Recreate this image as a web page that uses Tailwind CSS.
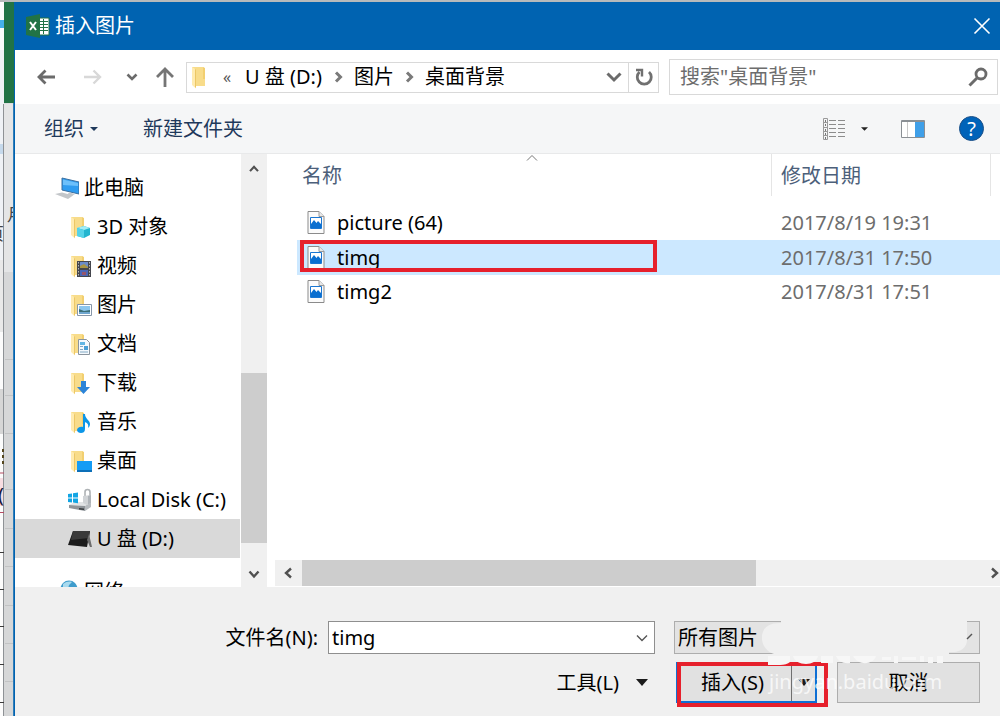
<!DOCTYPE html>
<html lang="zh-CN">
<head>
    <meta charset="UTF-8">
    <meta name="viewport" content="width=device-width, initial-scale=1.0">
    <title>插入图片</title>
    <script src="https://cdn.jsdelivr.net/npm/@tailwindcss/browser@4"></script>
</head>
<body class="h-screen overflow-hidden flex flex-col bg-[#dcdddf] font-['Noto_Sans','Noto_Sans_CJK_SC',sans-serif] text-xl leading-7 text-black">

<!-- Shared icon shapes -->
<svg class="hidden">
    <defs>
        <symbol id="folder" viewBox="0 0 22 24">
            <path d="M1 2h11l2 2v17H5L1 19z" fill="#f8dc8a"/>
            <path d="M1 2l4 2.500v19L1 20z" fill="#ffebb0"/>
            <path d="M5 4.500V23l-1-1V4z" fill="#ecc766"/>
            <path d="M12 2l2 1v11h-2z" fill="#f2cf70"/>
        </symbol>
        <symbol id="image-file" viewBox="0 0 18 24">
            <path d="M1 .5h11l5 5v17H1z" fill="#fbfbfb" stroke="#8b8b8b"/>
            <path d="M12 .5v5h5" fill="#e8e8e8" stroke="#9a9a9a"/>
            <path d="M3.500 6.500h11v11h-11z" fill="#fff" stroke="#1976d2"/>
            <path d="M4 17v-4l3-4 2.500 3 1.500-2 3 3v4z" fill="#0a6fd0"/>
        </symbol>
    </defs>
</svg>

<!-- Ribbon edge above the dialog -->
<div class="h-[2px] shrink-0 bg-[#b7babb]"></div>

<div class="flex flex-1 min-h-0">
    <!-- Workbook window showing behind the dialog -->
    <svg class="w-[14px] h-full shrink-0" viewBox="0 0 14 714" preserveAspectRatio="xMinYMin slice">
        <path d="M0 0h4v714H0z" fill="#fcfcfc"/>
        <path d="M0 18h4v8H0z" fill="#45b0ea"/>
        <path d="M0 48h4v210H0z" fill="#eff2f6"/>
        <path d="M0 258h4v72H0z" fill="#e9e9e9"/>
        <path d="M0 142h4v10H0z" fill="#c5d9ec"/>
        <path d="M0 387h4v45H0z" fill="#d6d6d6"/>
        <path d="M0 476h4v28H0z" fill="#f7dde2"/>
        <path d="M4 102h9v612H4z" fill="#e4e5e6"/>
        <path d="M4 270h9v444H4z" fill="#d6d7d8"/>
        <path d="M4 0h10v101H4z" fill="#217346"/>
        <path d="M3.500 102v612" stroke="#8e9296"/>
        <path d="M5 357.500h8M5 393.500h8M5 431.500h8M5 487.500h8M5 526.500h8M5 564.500h8M5 603.500h8M5 641.500h8M5 679.500h8" stroke="#c2c3c4"/>
        <path d="M0 550.500h4M0 587.500h4M0 624.500h4M0 662.500h4M0 700.500h4" stroke="#3a3a3a"/>
        <path d="M0 471h4M0 510.500h4" stroke="#b54c62"/>
        <path d="M2 447h2v3H2zM2 453h2v3H2zM2 459h2v3H2z" fill="#55471f"/>
        <text x="7" y="219" font-size="17" fill="#444">月</text>
        <text x="-13" y="238" font-size="17" fill="#444">页</text>
        <text x="-2" y="500" font-size="20" fill="#16163a">(</text>
        <path d="M13.500 101v613" stroke="#2f7cb8"/>
    </svg>

    <!-- Dialog -->
    <main class="flex-1 min-w-0 flex flex-col bg-white border-l border-[#0063b1]">
        <!-- Title bar -->
        <header class="h-12 shrink-0 bg-[#0063b1] text-white flex items-center pl-[11px] pr-[9px]">
            <svg class="w-6 h-6" viewBox="0 0 24 24">
                <path d="M11 4h12v17H11z" fill="#fff" stroke="#217346"/>
                <path d="M13 7.500h9M13 10.500h9M13 13.500h9M13 16.500h9M17.500 5v15" stroke="#217346"/>
                <path d="M0 3l14-3v24L0 21z" fill="#217346"/>
                <path d="M4 8l6 8M10 8l-6 8" stroke="#fff" stroke-width="2"/>
            </svg>
            <h1 class="ml-[5px] flex-1">插入图片</h1>
            <button aria-label="关闭">
                <svg class="w-[18px] h-[18px]" viewBox="0 0 18 18"><path d="M1.500 1.500l15 15M16.500 1.500l-15 15" stroke="#fff" stroke-width="1.600"/></svg>
            </button>
        </header>

        <!-- Navigation -->
        <nav class="h-[54px] shrink-0 flex items-center pl-[22px] pr-[2px]">
            <button aria-label="后退" class="mr-[29px]">
                <svg class="w-[18px] h-[18px]" viewBox="0 0 18 18" fill="none" stroke="#6b6b6b" stroke-width="2.800"><path d="M18 9H2M8.500 2.500L2 9l6.500 6.500"/></svg>
            </button>
            <button aria-label="前进" class="mr-6">
                <svg class="w-[18px] h-[18px]" viewBox="0 0 18 18" fill="none" stroke="#d8d8d8" stroke-width="2.400"><path d="M0 9h16M9.500 2.500L16 9l-6.500 6.500"/></svg>
            </button>
            <button aria-label="最近浏览的位置" class="mr-[18px]">
                <svg class="w-3 h-3" viewBox="0 0 12 12" fill="none" stroke="#6b6b6b" stroke-width="2.600"><path d="M1.500 3.500L6 8l4.500-4.500"/></svg>
            </button>
            <button aria-label="上移" class="mr-3">
                <svg class="w-[18px] h-5" viewBox="0 0 18 20" fill="none" stroke="#757575" stroke-width="2.800"><path d="M9 20V2M1 10l8-8 8 8"/></svg>
            </button>
            <div class="flex-1 h-[31px] flex items-center border border-[#d9d9d9] whitespace-nowrap">
                <svg class="w-[22px] h-6 ml-1" viewBox="0 0 22 24"><use href="#folder"/></svg>
                <span class="ml-[10px] w-[22px] text-base text-[#555]">«</span>
                <a href="#" class="w-[88px]">U 盘 (D:)</a>
                <svg class="w-3 h-3" viewBox="0 0 12 12" fill="none" stroke="#7a7a7a" stroke-width="3"><path d="M3 1.500L7.500 6 3 10.500"/></svg>
                <a href="#" class="ml-[9px] w-[50px]">图片</a>
                <svg class="w-3 h-3" viewBox="0 0 12 12" fill="none" stroke="#7a7a7a" stroke-width="3"><path d="M3 1.500L7.500 6 3 10.500"/></svg>
                <a href="#" class="ml-[9px] flex-1">桌面背景</a>
                <button aria-label="以前的位置" class="mr-[6px]">
                    <svg class="w-4 h-4" viewBox="0 0 16 16" fill="none" stroke="#6b6b6b" stroke-width="3"><path d="M1.500 4.500L8 11l6.500-6.500"/></svg>
                </button>
                <button aria-label="刷新" class="h-full w-[30px] border-l border-[#d9d9d9] flex items-center justify-center">
                    <svg class="w-[18px] h-[18px]" viewBox="0 0 18 18" fill="none" stroke="#707070" stroke-width="2.800"><path d="M14 4A7 7 0 1 1 4.500 4"/><path d="M1 2h6v6.500" stroke-width="2.400"/></svg>
                </button>
            </div>
            <div class="ml-[10px] w-[329px] h-9 flex items-center border border-[#d9d9d9] pl-[10px] pr-[9px]">
                <input type="text" aria-label="搜索" placeholder='搜索"桌面背景"' class="flex-1 min-w-0 outline-none placeholder:text-[#6d6d6d]">
                <svg class="w-5 h-5" viewBox="0 0 20 20" fill="none" stroke="#6b6b6b"><circle cx="13" cy="7" r="5" stroke-width="2.800"/><path d="M9.500 10.500L1.500 18.500" stroke-width="3"/></svg>
            </div>
        </nav>

        <!-- Toolbar -->
        <div class="h-[50px] shrink-0 flex items-center bg-[#f5f6f7] border-b border-[#e8e9ea] pl-[29px] pr-4 text-[#1e395b]">
            <button class="flex items-center w-[99px]">组织
                <svg class="w-2 h-1 ml-[6px]" viewBox="0 0 8 4"><path d="M0 0h8L4 4z" fill="#1e395b"/></svg>
            </button>
            <button>新建文件夹</button>
            <button aria-label="更改视图" class="ml-auto flex items-center">
                <svg class="w-[23px] h-[22px]" viewBox="0 0 23 22" fill="none">
                    <path d="M.5.5h4v21h-4zM.5 4.500h4M.5 9.500h4M.5 13.500h4M.5 17.500h4" stroke="#9a9a9a"/>
                    <path d="M2.500 2v2M2.500 6v2M2.500 11v2M2.500 15v2M2.500 19v2" stroke="#777"/>
                    <path d="M6 2.500h7M6 6.500h7M6 10.500h7M6 14.500h7M6 18.500h7M15 2.500h7M15 6.500h7M15 10.500h7M15 14.500h7M15 18.500h7" stroke="#8c8c8c"/>
                </svg>
                <svg class="w-[7px] h-1 ml-[15px]" viewBox="0 0 8 4"><path d="M0 0h8L4 4z" fill="#222"/></svg>
            </button>
            <button aria-label="预览窗格" class="ml-[33px]">
                <svg class="w-6 h-[18px]" viewBox="0 0 24 18"><path d="M.5.5h23v17H.5z" fill="#fff" stroke="#8a8f94"/><path d="M6.500 1v16" stroke="#c9c9c9"/><path d="M14 1h9v16h-9z" fill="#3f9fe8"/><path d="M1 1.500h22" stroke="#8a8f94"/></svg>
            </button>
            <button aria-label="帮助" class="ml-[34px] size-[25px] rounded-full bg-[#0063b9] border border-[#1b4f87] text-white text-xl leading-[23px]">?</button>
        </div>

        <div class="flex-1 min-h-0 flex">
            <!-- Folder tree -->
            <ul class="w-[225px] shrink-0 overflow-hidden pt-[14px] whitespace-nowrap">
                <li class="h-[39px] flex items-center pl-10">
                    <svg class="w-6 h-6 mr-[5px]" viewBox="0 0 24 24">
                        <path d="M7 2l17 4v12L7 14z" fill="#2f9cf0" stroke="#3b6f9f"/>
                        <path d="M8 3.500l15 3.500v3L8 9z" fill="#6cc0fb"/>
                        <path d="M14 16.500l6 1.500-3 2-5-1z" fill="#c4c8cc"/>
                        <path d="M0 18l7-1.500 11 3-5 3.500z" fill="#c3c6c9"/>
                    </svg>此电脑
                </li>
                <li class="h-[39px] flex items-center pl-[55px]">
                    <svg class="w-[22px] h-6 mr-[5px]" viewBox="0 0 22 24"><use href="#folder"/>
                        <path d="M7 13l7-2 6 2v7l-6 3-7-2z" fill="#23b5cf"/><path d="M7 13l7-2 6 2-6 2z" fill="#a3ecf6"/><path d="M7 13l7 2v8l-7-2z" fill="#55d3e8"/>
                    </svg>3D 对象
                </li>
                <li class="h-[39px] flex items-center pl-[55px]">
                    <svg class="w-[22px] h-6 mr-[5px]" viewBox="0 0 22 24"><use href="#folder"/>
                        <path d="M7 7h14v16H7z" fill="#44464d"/><path d="M10 8h8v6h-8z" fill="#6b8cc8"/><path d="M10 16h8v6h-8z" fill="#4a66b4"/><path d="M10 12l4-2 4 3v1h-8z" fill="#a99545"/><path d="M12 18h4v3h-4z" fill="#95546c"/>
                        <path d="M8.500 8v15M19.500 8v15" stroke="#b8b8b8" stroke-dasharray="1.500 1.500"/>
                    </svg>视频
                </li>
                <li class="h-[39px] flex items-center pl-[55px]">
                    <svg class="w-[22px] h-6 mr-[5px]" viewBox="0 0 22 24"><use href="#folder"/>
                        <path d="M7.500 11.500h14v11h-14z" fill="#fff" stroke="#8796a8"/><path d="M9 13h11v5H9z" fill="#8cc6ee"/><path d="M9 16l5 2 6-1v4H9z" fill="#3c6f78"/><path d="M9 19h11v2H9z" fill="#6fa6cf"/>
                    </svg>图片
                </li>
                <li class="h-[39px] flex items-center pl-[55px]">
                    <svg class="w-[22px] h-6 mr-[5px]" viewBox="0 0 22 24"><use href="#folder"/>
                        <path d="M8.500 7.500h8l3 3v12h-11z" fill="#f4f9fd" stroke="#8a949e"/><path d="M10 10h5v3h-5z" fill="#62b6e4"/><path d="M10 14.500h3M10 17.500h3M10 20h8" stroke="#82a9c4"/><path d="M14 14h4v4h-4z" fill="#4aa0d6"/>
                    </svg>文档
                </li>
                <li class="h-[39px] flex items-center pl-[55px]">
                    <svg class="w-[22px] h-6 mr-[5px]" viewBox="0 0 22 24"><use href="#folder"/>
                        <path d="M11 10h5v6h4l-6.500 7L7 16h4z" fill="#2c84d8"/>
                    </svg>下载
                </li>
                <li class="h-[39px] flex items-center pl-[55px]">
                    <svg class="w-[22px] h-6 mr-[5px]" viewBox="0 0 22 24"><use href="#folder"/>
                        <path d="M13 4h2c0 5 5 6 5 10 0 2-1 3-2 4 1-4-1-5-3-6v7c0 3-2 4-4 4s-4-1-4-3 3-4 6-3z" fill="#0c96e8"/>
                    </svg>音乐
                </li>
                <li class="h-[39px] flex items-center pl-[55px]">
                    <svg class="w-[22px] h-6 mr-[5px]" viewBox="0 0 22 24"><use href="#folder"/>
                        <path d="M7 12h15v11H7z" fill="#149cf5"/><path d="M7 21h15v2H7z" fill="#0c6fb8"/>
                    </svg>桌面
                </li>
                <li class="h-[39px] flex items-center pl-[53px]">
                    <svg class="w-6 h-6 mr-[5px]" viewBox="0 0 24 24">
                        <path d="M1 17l6-3h16l-6 4z" fill="#e2e4e6"/><path d="M1 17l16 1v5L1 20z" fill="#8f9499"/><path d="M17 18l6-4v5l-6 4z" fill="#b7bbbf"/><path d="M11 20l5 .5v1.500l-5-.5z" fill="#3a3d40"/>
                        <path d="M0 6l4-.6v4H0zM5 5.200l5-.7v4.900H5zM0 10.500h4v4l-4-.6zM5 10.500h5v4.800l-5-.7z" fill="#12a5e4"/>
                        <path d="M17 8V4a2.500 2.500 0 0 1 5 0v4" fill="none" stroke="#aeb2b5" stroke-width="1.600"/><path d="M15 8l8-1v8l-4 2-4-2z" fill="#d0d3d6"/><path d="M20 8l3-1v8l-3 1.500z" fill="#aeb3b8"/>
                    </svg>Local Disk (C:)
                </li>
                <li class="h-[39px] flex items-center pl-[53px] bg-[#d9d9d9]">
                    <svg class="w-6 h-6 mr-[5px]" viewBox="0 0 24 24">
                        <path d="M5 4h17l-3 16-19-2z" fill="#1b1b1b"/><path d="M5 4h17l-1 7-18 2z" fill="#3a3a3a"/><path d="M21 7l3 13h-2l-3-7z" fill="#6c6c6c"/>
                    </svg>U 盘 (D:)
                </li>
                <li class="mt-[14px] h-[39px] flex items-center pl-10">
                    <svg class="w-6 h-6 mr-[5px]" viewBox="0 0 24 24">
                        <circle cx="14" cy="9" r="8.500" fill="#3f9ccc"/><path d="M8 4c3-3 8-3 9-2l-3 3-1 4-5 1z" fill="#a9daee"/><path d="M1 7l10 2v9L1 15z" fill="#2b8fc8"/>
                    </svg>网络
                </li>
            </ul>

            <!-- Tree scrollbar -->
            <div class="w-[26px] ml-px shrink-0 bg-[#f0f0f0] flex flex-col">
                <svg class="size-[26px] pt-[3px]" viewBox="0 0 26 26" fill="none" stroke="#505050" stroke-width="2.400"><path d="M8.500 16l4.500-5 4.500 5"/></svg>
                <div class="mt-[193px] h-[170px] bg-[#cdcdcd]"></div>
                <svg class="size-[26px] mt-auto" viewBox="0 0 26 26" fill="none" stroke="#505050" stroke-width="2.400"><path d="M8.500 10.500l4.500 5 4.500-5"/></svg>
            </div>

            <!-- File list -->
            <section class="ml-2 flex-1 min-w-0 flex flex-col relative">
                <table class="ml-[22px] table-fixed text-left">
                    <colgroup><col><col class="w-[219px]"><col class="w-[10px]"></colgroup>
                    <thead class="text-[#4c607a]">
                        <tr class="h-[52px] align-top">
                            <th class="font-normal pl-[5px] pt-2">名称</th>
                            <th class="font-normal"><div class="h-[42px] border-l border-[#e5e5e5] pl-[9px] pt-2">修改日期</div></th>
                            <th><div class="h-[42px] border-l border-[#e5e5e5]"></div></th>
                        </tr>
                    </thead>
                    <tbody>
                        <tr class="h-[34px]">
                            <td class="pl-[10px]"><div class="flex items-center"><svg class="w-[18px] h-6 mr-3" viewBox="0 0 18 24"><use href="#image-file"/></svg>picture (64)</div></td>
                            <td class="pl-[10px] text-[#6d6d6d]">2017/8/19 19:31</td>
                            <td></td>
                        </tr>
                        <tr class="h-[35px] bg-[#cce8ff]">
                            <td class="pl-[10px] relative">
                                <div class="flex items-center"><svg class="w-[18px] h-6 mr-3" viewBox="0 0 18 24"><use href="#image-file"/></svg>timg</div>
                                <div class="absolute left-[3px] top-0 w-[357px] h-8 border-4 border-[#e6202c]"></div>
                            </td>
                            <td class="pl-[10px] text-[#6d6d6d]">2017/8/31 17:50</td>
                            <td></td>
                        </tr>
                        <tr class="h-[34px]">
                            <td class="pl-[10px]"><div class="flex items-center"><svg class="w-[18px] h-6 mr-3" viewBox="0 0 18 24"><use href="#image-file"/></svg>timg2</div></td>
                            <td class="pl-[10px] text-[#6d6d6d]">2017/8/31 17:51</td>
                            <td></td>
                        </tr>
                    </tbody>
                </table>
                <!-- Sort marker -->
                <svg class="absolute left-[251px] top-0 w-3 h-2" viewBox="0 0 12 8" fill="none" stroke="#777"><path d="M1 6.500l5-5 5 5"/></svg>

                <!-- Horizontal scrollbar -->
                <div class="mt-auto h-[26px] mb-px bg-[#f0f0f0] flex">
                    <svg class="w-[27px] h-[26px]" viewBox="0 0 27 26" fill="none" stroke="#505050" stroke-width="2.400"><path d="M16 8.500L11 13l5 4.500"/></svg>
                    <div class="w-[454px] bg-[#cdcdcd]"></div>
                    <svg class="ml-auto w-3 h-[26px]" viewBox="0 0 12 26" fill="none" stroke="#505050" stroke-width="2.400"><path d="M4 8.500L9 13l-5 4.500"/></svg>
                </div>
            </section>
        </div>

        <!-- File name and actions -->
        <footer class="h-[129px] shrink-0 bg-[#f0f0f0] pt-[34px] pr-5 flex gap-[19px]">
            <div class="flex-1 min-w-0">
                <div class="flex items-center justify-end">
                    <label for="filename" class="mr-[10px]">文件名(N):</label>
                    <div class="w-[327px] h-[33px] flex items-center bg-white border border-[#8f8f8f] pl-[3px] pr-1.5">
                        <input id="filename" type="text" value="timg" class="flex-1 min-w-0 outline-none">
                        <svg class="w-3 h-3" viewBox="0 0 12 12" fill="none" stroke="#555" stroke-width="1.400"><path d="M1 3.500l5 5 5-5"/></svg>
                    </div>
                </div>
                <div class="mt-2 h-[41px] flex items-center justify-end pr-[7px]">
                    <button class="flex items-center">工具(L)
                        <svg class="w-3 h-[7px] ml-[17px]" viewBox="0 0 12 7"><path d="M0 0h12L6 7z" fill="#1b1b1b"/></svg>
                    </button>
                </div>
            </div>
            <div class="w-[306px] shrink-0 relative">
                <select aria-label="文件类型" class="block w-full h-[33px] appearance-none bg-[#e3e3e3] border border-[#adadad] pl-[3px] leading-[30px]">
                    <option>所有图片</option>
                </select>
                <div class="mt-2 h-[41px] flex">
                    <div class="ml-[2px] w-[141px] flex border-2 border-[#0f6fd4] bg-[#e1e1e1] relative">
                        <button class="flex-1 pr-1">插入(S)</button>
                        <button aria-label="插入选项" class="w-6 border-l border-[#707070] flex items-center justify-center">
                            <svg class="w-3 h-[7px]" viewBox="0 0 12 7"><path d="M0 0h12L6 7z" fill="#1b1b1b"/></svg>
                        </button>
                        <div class="absolute left-[-1px] top-[-2px] w-[151px] h-[45px] border-4 border-[#e6202c]"></div>
                    </div>
                    <button class="ml-5 flex-1 bg-[#e1e1e1] border border-[#adadad]">取消</button>
                </div>
                <!-- Erased patch and site watermark -->
                <svg class="absolute left-[88px] top-[-2px] w-[220px] h-[46px]" viewBox="0 0 220 46">
                    <path d="M19 0h186v22c-1 7-6 10-12 11h-6v5H14L12 35C3 32-1 24 0 16 2 7 8 4 19 4z" fill="#f0f0f0"/>
                    <path d="M205 20l5-5" stroke="#555" stroke-width="1.400"/>
                    <path d="M6 37h22v6c-2 2-6 3-10 3H6zM31 37h25c-1 5-6 8-12 8s-12-3-13-8zM59 37h12v7H59zM74 37h14v7c-7 1-12-2-14-7zM91 37h23c-2 8-17 11-23 0zM120 38h9v3h-9zM132 37h4v7h-4zM140 38h14v3h-14zM158 37h4v6h-4zM166 38h5v6h-5zM175 37h6v7h-6z" fill="#f7f7f7"/>
                </svg>
                <span class="absolute left-[95px] top-[47px] text-white/75 pointer-events-none">jingyan.baidu.com</span>
            </div>
        </footer>
    </main>
</div>

</body>
</html>
